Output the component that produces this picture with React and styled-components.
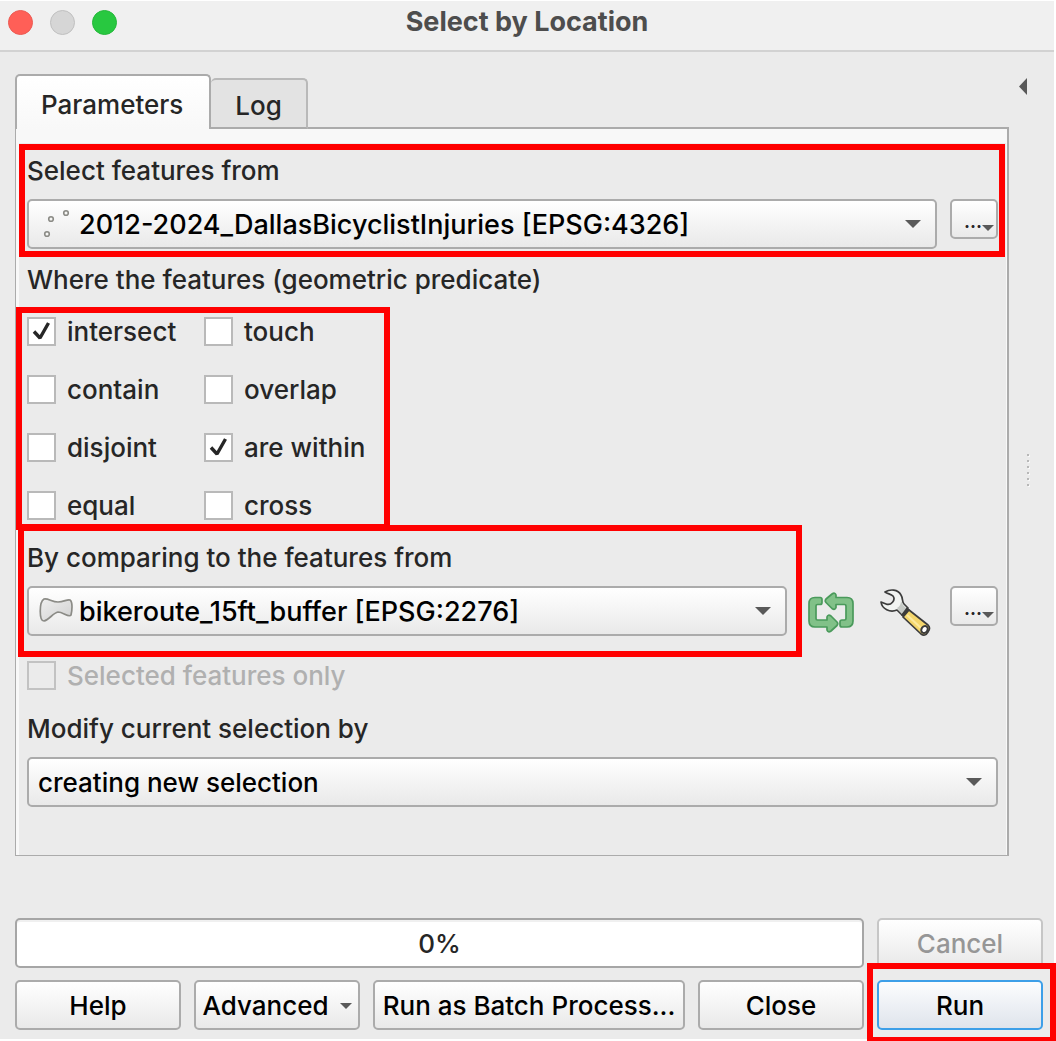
import React, { useState } from "react";
import styled, { createGlobalStyle, css } from "styled-components";

const GlobalStyle = createGlobalStyle`
  *, *::before, *::after { box-sizing: border-box; }
  body {
    margin: 0;
    min-height: 100vh;
    background: #ffffff;
    font-family: Inter, "Liberation Sans", sans-serif;
    font-size: 26px;
    font-weight: 500;
    line-height: 32px;
    color: #262626;
    overflow: hidden;
  }
  button, select, input { font: inherit; margin: 0; }
`;

const raised = css`
  border: 2px solid #ababab;
  border-radius: 5px;
  background: linear-gradient(#ffffff, #e9e9e9);
`;

const Dialog = styled.main`
  display: flex;
  flex-direction: column;
  margin: 1px 2px 1px 0;
  background: #ebebeb;
`;

const TitleBar = styled.header`
  display: grid;
  grid-template-columns: 1fr auto 1fr;
  height: 51px;
  padding: 5px 8px 0;
  background: #f0f0f0;
  border-bottom: 2px solid #d2d2d2;
`;

const Title = styled.h1`
  margin: 0;
  font-size: 27px;
  line-height: 32px;
  font-weight: 700;
  color: #4d4d4d;
`;

const Lights = styled.div`
  display: flex;
  gap: 17px;
  padding-top: 4px;
`;

const Light = styled.button`
  width: 25px;
  height: 25px;
  padding: 0;
  border-radius: 50%;
  border: 1px solid ${(p) => p.$edge};
  background: ${(p) => p.$fill};
`;

const Body = styled.div`
  display: flex;
  padding: 22px 7px 0 15px;
`;

const MainColumn = styled.div`
  flex: 1;
  min-width: 0;
`;

const TabList = styled.div`
  display: flex;
  align-items: flex-end;
  margin-bottom: -2px;
`;

const Tab = styled.button`
  height: ${(p) => (p.$active ? 55 : 51)}px;
  padding: ${(p) => (p.$active ? "4px 26px 0 24px" : "5px 24px 0")};
  border: 2px solid ${(p) => (p.$active ? "#ababab" : "#b9b9b9")};
  border-left-width: ${(p) => (p.$active ? 2 : 0)}px;
  border-bottom: ${(p) => (p.$active ? "0" : "2px solid #ababab")};
  border-radius: 5px 5px 0 0;
  background: ${(p) => (p.$active ? "linear-gradient(#ffffff, #f8f8f8)" : "#e3e3e3")};
  color: #262626;
`;

const Pane = styled.section`
  padding: 14px 1px 0 3px;
  border: solid #ababab;
  border-width: 2px 2px 1px 1px;
  background: #f8f8f8;
`;

const Form = styled.form`
  display: flex;
  flex-direction: column;
  padding: 12px 8px 48px;
  background: #ebebeb;
`;

/* Red frame laid over a part of the form to call attention to it. */
const Highlight = styled.div`
  position: relative;
  &::after {
    content: "";
    position: absolute;
    inset: ${(p) => p.$inset};
    border: 6px solid #ff0000;
    pointer-events: none;
  }
`;

const Field = styled.div`
  display: flex;
  flex-direction: column;
  gap: 12px;
`;

const Row = styled.div`
  display: flex;
  align-items: flex-start;
`;

const Grow = styled.div`
  flex: 1;
  min-width: 0;
`;

const Caption = styled.div`
  margin-top: 15px;
`;

const SelectBox = styled.div`
  ${raised}
  display: grid;
  grid-template-columns: 40px 1fr 36px;
  align-items: center;
  height: 50px;
  padding-left: 9px;
`;

const NativeSelect = styled.select`
  grid-area: 1 / 1 / 2 / 4;
  width: 100%;
  height: 46px;
  padding: 2px 36px 0 ${(p) => (p.$layer ? 41 : 0)}px;
  appearance: none;
  border: 0;
  outline: 0;
  background: transparent;
  font-size: ${(p) => (p.$layer ? 27 : 26)}px;
  color: #000000;
`;

const SelectIcon = styled.span`
  grid-area: 1 / 1;
  display: flex;
  padding-left: 1px;
  pointer-events: none;
`;

const SelectArrow = styled.span`
  grid-area: 1 / 3;
  display: flex;
  padding-left: 6px;
  pointer-events: none;
`;

const MoreButton = styled.button`
  ${raised}
  display: flex;
  align-items: flex-end;
  justify-content: flex-end;
  width: 48px;
  height: 40px;
  margin-left: ${(p) => p.$gap}px;
  padding: 0 2px 6px 0;
  font-size: 18px;
  font-weight: 700;
  line-height: 18px;
  color: #262626;
`;

const IconButton = styled.button`
  display: flex;
  align-items: center;
  height: 50px;
  padding: 4px 0 0;
  margin-left: ${(p) => p.$gap}px;
  border: 0;
  background: transparent;
`;

const Predicates = styled.div`
  display: grid;
  grid-template-columns: 177px 160px;
  gap: 29px 0;
  width: max-content;
`;

const CheckLabel = styled.label`
  display: flex;
  align-items: center;
  gap: 11px;
  height: 29px;
  white-space: nowrap;
  color: ${(p) => (p.$disabled ? "#b0b0b0" : "inherit")};
`;

const CheckFrame = styled.span`
  display: grid;
  flex: none;
  place-items: center;
  width: 29px;
  height: 29px;
  & > * { grid-area: 1 / 1; }
  svg { pointer-events: none; }
`;

const CheckInput = styled.input`
  width: 29px;
  height: 29px;
  appearance: none;
  border: 2px solid #b9b9b9;
  background: #ffffff;
  &:disabled { background: transparent; border-color: #c2c2c2; }
`;

const SideRail = styled.aside`
  display: flex;
  flex-direction: column;
  align-items: center;
  width: 38px;
  padding: 4px 0 12px;
`;

const CollapseButton = styled.button`
  display: flex;
  padding: 0;
  margin-right: 10px;
  border: 0;
  background: transparent;
`;

const Grip = styled.div`
  display: grid;
  gap: 4px;
  margin: auto 0;
  span {
    width: 2px;
    height: 2px;
    background: #b8b8b8;
    box-shadow: 1px 1px 0 #f8f8f8;
  }
`;

const Footer = styled.footer`
  display: grid;
  grid-template-columns: 1fr 1fr 312px 1fr 1fr;
  grid-auto-rows: 50px;
  gap: 12px 13px;
  padding: 62px 11px 9px 15px;
`;

const Progress = styled.div`
  grid-column: span 4;
  display: grid;
  place-items: center;
  padding-top: 1px;
  border: 2px solid #a6a6a6;
  border-radius: 5px;
  background: #ffffff;
  box-shadow: inset 0 2px 0 #f0f0f0;
`;

const PushButton = styled.button`
  ${raised}
  display: flex;
  align-items: center;
  justify-content: center;
  gap: 11px;
  width: 100%;
  height: 50px;
  padding: 2px 0 0;
  white-space: nowrap;
  color: #000000;
  ${(p) => p.$primary && css`
    border-color: #3d9fe8;
    background: linear-gradient(#fcfdfe, #dfe4ec);
  `}
  &:disabled { color: #969696; border-color: #c6c6c6; }
`;

const Triangle = ({ width, height }) => (
  <svg width={width} height={height} viewBox="0 0 16 8" preserveAspectRatio="none" aria-hidden="true">
    <path d="M0 0H16L8 8Z" fill="#595959" />
  </svg>
);

const PointsIcon = () => (
  <svg width="32" height="30" viewBox="0 0 32 30" fill="#f6f6f4" stroke="#8b8b86" strokeWidth="1.6" aria-hidden="true">
    <circle cx="12" cy="10" r="2.3" />
    <circle cx="27" cy="4" r="2.3" />
    <circle cx="8" cy="25" r="2.3" />
  </svg>
);

const PolygonIcon = () => (
  <svg width="34" height="26" viewBox="0 0 34 26" aria-hidden="true">
    <defs>
      <linearGradient id="polygon-fill" x1="0" y1="0" x2="1" y2="1">
        <stop offset="0" stopColor="#efefef" />
        <stop offset="1" stopColor="#d0d0d0" />
      </linearGradient>
    </defs>
    <path
      d="M5 1C9 0 13 4 19 4C25 4 28 1 31 2C34 4 33 13 32 17C30 20 24 14 19 14C14 15 10 22 5 23C0 23 0 4 5 1Z"
      fill="url(#polygon-fill)" stroke="#8b8b86" strokeWidth="1.7" strokeLinejoin="round"
    />
  </svg>
);

const IterateIcon = () => (
  <svg width="46" height="42" viewBox="0 0 46 42" fill="#81c188" stroke="#4a9a5b" strokeWidth="1.7" strokeLinejoin="round" aria-hidden="true">
    <path d="M12.5 5.5H7Q1 5.5 1 11.5V29Q1 35 7 35H19V38Q20 41 23 39L29 33.500Q30.500 31.500 29 30L23 24Q20 22 19 25V28H9.500Q8 28 8 26.500V14Q8 12.500 9.500 12.500H12Q14 12.500 14 10.500V7.500Q14 5.500 12 5.500Z" />
    <path d="M33.500 35H39Q45 35 45 29V11.500Q45 5.500 39 5.500H28V3Q27 0 24 2L18 7Q16.500 9 18 10.500L24 16.500Q27 18.500 28 15.500V12.500H36.500Q38 12.500 38 14V26.500Q38 28 36.500 28H34Q32 28 32 30V33Q32 35 34 35Z" />
  </svg>
);

const WrenchIcon = () => (
  <svg width="52" height="48" viewBox="0 0 52 48" strokeLinejoin="round" aria-hidden="true">
    <path
      d="M5 3C10 0 18 0 21 6C23 9 22 13 24 15L28 19L22 26L17 21C10 24 2 20 1 13L6 15C11 17 16 11 13 7C11 5 8 5 5 3Z"
      fill="#f2f4f2" stroke="#3c3c3c" strokeWidth="1.7"
    />
    <path d="M17 19Q21 17 21 12L23 16L27 20L22 25Z" fill="#c5c9c5" />
    <path d="M21 26L27 18L30 21L24 29Z" fill="#3c3c3c" />
    <path d="M29 21L48 36Q51 39 48 43Q45 48 41 45L23 28Z" fill="#f4d66b" stroke="#3c3c3c" strokeWidth="1.7" />
    <path d="M27 26L41 39" stroke="#fbe89e" strokeWidth="2.2" />
    <ellipse cx="44.5" cy="40.5" rx="3" ry="3.7" transform="rotate(35 44.5 40.5)" fill="#ffffff" stroke="#3c3c3c" strokeWidth="2" />
  </svg>
);

const CheckMark = () => (
  <svg width="19" height="21" viewBox="0 0 19 21" fill="none" aria-hidden="true">
    <path d="M2 10.5L8 17L16.500 2" stroke="#262626" strokeWidth="3.4" strokeLinejoin="bevel" />
  </svg>
);

function CheckBox({ label, initial = false, disabled = false }) {
  const [checked, setChecked] = useState(initial);
  return (
    <CheckLabel $disabled={disabled}>
      <CheckFrame>
        <CheckInput
          type="checkbox"
          checked={checked}
          disabled={disabled}
          onChange={(e) => setChecked(e.target.checked)}
        />
        {checked && <CheckMark />}
      </CheckFrame>
      {label}
    </CheckLabel>
  );
}

function Combo({ id, value, icon }) {
  return (
    <SelectBox>
      {icon && <SelectIcon>{icon}</SelectIcon>}
      <NativeSelect id={id} $layer={Boolean(icon)} defaultValue={value}>
        <option>{value}</option>
      </NativeSelect>
      <SelectArrow><Triangle width={16} height={8} /></SelectArrow>
    </SelectBox>
  );
}

const More = ({ gap }) => (
  <MoreButton type="button" $gap={gap} aria-label="More options">
    ...
    <Triangle width={12} height={6} />
  </MoreButton>
);

const predicates = [
  ["intersect", true], ["touch", false],
  ["contain", false], ["overlap", false],
  ["disjoint", false], ["are within", true],
  ["equal", false], ["cross", false],
];

const PredicateBlock = styled(Highlight)`
  width: max-content;
  margin: 21px 0 22px;
`;

const CompareRow = styled(Row)`
  align-items: flex-end;
`;

const CompareTools = styled(Row)`
  height: 50px;
`;

const Spaced = styled.div`
  margin: 25px 0 23px;
`;

export default function App() {
  return (
    <>
      <GlobalStyle />
      <Dialog>
        <TitleBar>
          <Lights>
            <Light aria-label="Close window" $fill="#ff5f57" $edge="#ec5a52" />
            <Light aria-label="Minimize window" $fill="#d6d6d6" $edge="#c0c0c0" />
            <Light aria-label="Zoom window" $fill="#28c840" $edge="#24b83a" />
          </Lights>
          <Title>Select by Location</Title>
        </TitleBar>

        <Body>
          <MainColumn>
            <TabList role="tablist">
              <Tab role="tab" aria-selected="true" $active>Parameters</Tab>
              <Tab role="tab" aria-selected="false">Log</Tab>
            </TabList>
            <Pane>
              <Form>
                <Highlight $inset="-11px -7px -8px -8px">
                  <Field>
                    <label htmlFor="source">Select features from</label>
                    <Row>
                      <Grow>
                        <Combo id="source" value="2012-2024_DallasBicyclistInjuries [EPSG:4326]" icon={<PointsIcon />} />
                      </Grow>
                      <More gap={13} />
                    </Row>
                  </Field>
                </Highlight>

                <Caption>Where the features (geometric predicate)</Caption>
                <PredicateBlock $inset="-10px -26px -10px -11px">
                  <Predicates>
                    {predicates.map(([label, on]) => (
                      <CheckBox key={label} label={label} initial={on} />
                    ))}
                  </Predicates>
                </PredicateBlock>

                <CompareRow>
                  <Grow>
                    <Highlight $inset="-17px -15px -21px -9px">
                      <Field>
                        <label htmlFor="compare">By comparing to the features from</label>
                        <Combo id="compare" value="bikeroute_15ft_buffer [EPSG:2276]" icon={<PolygonIcon />} />
                      </Field>
                    </Highlight>
                  </Grow>
                  <CompareTools>
                    <IconButton type="button" $gap={21} aria-label="Iterate over this layer">
                      <IterateIcon />
                    </IconButton>
                    <IconButton type="button" $gap={26} aria-label="Advanced options">
                      <WrenchIcon />
                    </IconButton>
                    <More gap={18} />
                  </CompareTools>
                </CompareRow>

                <Spaced>
                  <CheckBox label="Selected features only" disabled />
                </Spaced>

                <Field>
                  <label htmlFor="modify">Modify current selection by</label>
                  <Combo id="modify" value="creating new selection" />
                </Field>
              </Form>
            </Pane>
          </MainColumn>
          <SideRail>
            <CollapseButton aria-label="Show help panel">
              <svg width="8" height="17" viewBox="0 0 8 17" aria-hidden="true">
                <path d="M8 0V17L0 8.5Z" fill="#595959" />
              </svg>
            </CollapseButton>
            <Grip>
              <span /><span /><span /><span /><span /><span />
            </Grip>
          </SideRail>
        </Body>

        <Footer>
          <Progress role="progressbar" aria-valuenow={0} aria-valuemin={0} aria-valuemax={100}>0%</Progress>
          <PushButton disabled>Cancel</PushButton>
          <PushButton>Help</PushButton>
          <PushButton>Advanced <Triangle width={12} height={6} /></PushButton>
          <PushButton>Run as Batch Process...</PushButton>
          <PushButton>Close</PushButton>
          <Highlight $inset="-17px -13px -13px -10px">
            <PushButton $primary>Run</PushButton>
          </Highlight>
        </Footer>
      </Dialog>
    </>
  );
}
